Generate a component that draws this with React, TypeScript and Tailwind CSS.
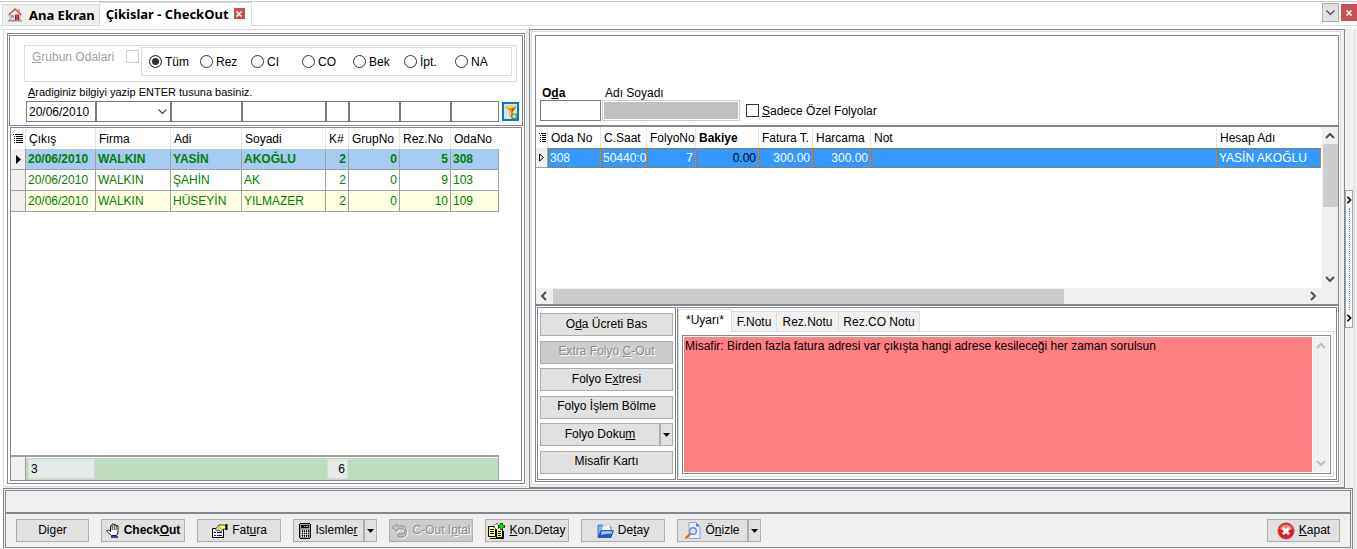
import React from 'react';
import clsx from 'clsx';

const filters = ['Tüm', 'Rez', 'CI', 'CO', 'Bek', 'İpt.', 'NA'];

const guests = [
  { date: '20/06/2010', firm: 'WALKIN', name: 'YASİN', surname: 'AKOĞLU', pax: 2, group: 0, rez: 5, room: '308' },
  { date: '20/06/2010', firm: 'WALKIN', name: 'ŞAHİN', surname: 'AK', pax: 2, group: 0, rez: 9, room: '103' },
  { date: '20/06/2010', firm: 'WALKIN', name: 'HÜSEYİN', surname: 'YILMAZER', pax: 2, group: 0, rez: 10, room: '109' },
];

const guestHeads = ['Çıkış', 'Firma', 'Adi', 'Soyadi', 'K#', 'GrupNo', 'Rez.No', 'OdaNo'];
const folioHeads = ['Oda No', 'C.Saat', 'FolyoNo', 'Bakiye', 'Fatura T.', 'Harcama', 'Not', 'Hesap Adı'];

const rowStyles = ['bg-[#a6caf0] font-bold', 'bg-white', 'bg-[#ffffe1]'];

type ChevronProps = { dir: 'up' | 'down' | 'left' | 'right'; className?: string };

function Chevron({ dir, className = 'size-[10px]' }: ChevronProps) {
  const d = {
    up: 'M1 7l4-4 4 4',
    down: 'M1 3l4 4 4-4',
    left: 'M7 1L3 5l4 4',
    right: 'M3 1l4 4-4 4',
  }[dir];
  return (
    <svg viewBox="0 0 10 10" className={clsx('shrink-0', className)} fill="none" stroke="currentColor" strokeWidth="2">
      <path d={d} />
    </svg>
  );
}

function ThinChevron({ className }: { className?: string }) {
  return (
    <svg viewBox="0 0 9 6" className={clsx('h-[6px] w-[9px]', className)} fill="none" stroke="#444" strokeWidth="1.200">
      <path d="M.5.5l4 4 4-4" />
    </svg>
  );
}

function ListIcon() {
  return (
    <svg viewBox="0 0 10 9" className="h-[9px] w-[10px]" shapeRendering="crispEdges">
      <path d="M0 0h1v1H0zM2 0h8v1H2zM1 2h1v1H1zM3 2h7v1H3zM1 4h1v1H1zM3 4h7v1H3zM1 6h1v1H1zM3 6h7v1H3zM1 8h1v1H1zM3 8h7v1H3z" fill="#000" />
    </svg>
  );
}

function SmallListIcon() {
  return (
    <svg viewBox="0 0 7 9" className="h-[9px] w-[7px]" shapeRendering="crispEdges">
      <path d="M0 0h1v1H0zM2 0h5v1H2zM1 2h1v1H1zM3 2h4v1H3zM1 4h1v1H1zM3 4h4v1H3zM1 6h1v1H1zM3 6h4v1H3zM1 8h1v1H1zM3 8h4v1H3z" fill="#000" />
    </svg>
  );
}

function HouseIcon() {
  return (
    <svg viewBox="0 0 14 14" className="size-[14px]">
      <path d="M2 6l5-4.500L12 6v6H2z" fill="#f4f4f4" stroke="#9a9a9a" />
      <path d="M.5 7L7 1l6.500 6" fill="none" stroke="#c9544c" strokeWidth="1.300" />
      <path d="M10 1h2v3l-2-1.500z" fill="#d8928c" />
      <path d="M3 7h3v3H3z" fill="#8d9dad" />
      <path d="M7 6.500h4V12H7z" fill="#b3131b" />
      <path d="M9 6.500V12" stroke="#f4c8c8" strokeWidth=".6" />
      <path d="M0 12.800h14" stroke="#9b9b9b" strokeWidth="1.500" />
    </svg>
  );
}

function FunnelIcon() {
  return (
    <svg viewBox="0 0 13 15" className="h-[15px] w-[13px]">
      <path d="M.5 2.500h12L8.500 8v6.500l-3-2.500V8z" fill="#dc9a12" />
      <path d="M8 4l4.500-1.500L8.500 8v6l-1.500-1z" fill="#a86c04" />
      <ellipse cx="6.500" cy="2.500" rx="6" ry="1.500" fill="#f4cf66" />
      <path d="M3 4.500L6.500 8v3" stroke="#ffe9a0" fill="none" />
      <path d="M7.500 9.500h5.500V15H7.500z" fill="#5fae45" />
      <path d="M10.200 10.500v3.500M8.500 12.200h3.500" stroke="#e4f8dc" />
    </svg>
  );
}

function HandIcon() {
  return (
    <svg viewBox="0 0 14 15" className="h-[15px] w-[14px]">
      <path d="M4.500 8.500V3q1-1.500 1.500 0V1.500q1-1.500 2 0v.5q1-1.200 2 0v1q1-1.200 2 0V9q0 2-1.500 3.500h-5L.8 8.500Q1 6.500 2.500 7.200z" fill="#fff" stroke="#000" strokeWidth=".9" />
      <path d="M6.200 3V7M8.200 2v5M10.200 3v4" stroke="#000" strokeWidth=".8" />
      <path d="M5 14h7" stroke="#0000c8" strokeWidth="1.500" />
    </svg>
  );
}

function InvoiceIcon() {
  return (
    <svg viewBox="0 0 17 14" className="h-[14px] w-[17px]">
      <path d="M1.500 4.500h11v9h-11z" fill="#fff" stroke="#000" />
      <path d="M3 8.500h2M6 8.500h5M3 11.500h2M6 11.500h5" stroke="#0000c8" />
      <path d="M4.500 5L8 1h5l2 1v3h-3l-2 3.500L8 6 6 7z" fill="#ffff70" stroke="#222" strokeWidth=".8" />
      <path d="M7 4h4M8 2l3 4M6.500 5.500L9 3" stroke="#999" strokeWidth=".6" />
      <path d="M14.500 0h2v6h-2z" fill="#000" />
    </svg>
  );
}

function CalculatorIcon() {
  return (
    <svg viewBox="0 0 12 16" className="h-[16px] w-[12px]" shapeRendering="crispEdges">
      <path d="M1 0h10v1h1v14h-1v1H1v-1H0V1h1z" fill="#000" />
      <path d="M1 1h10v14H1z" fill="#9a9a9a" />
      <path d="M2 2h8v3H2z" fill="#111" />
      <path d="M5 3h1v1H5zM7 3h2v1H7z" fill="#4fd8d8" />
      <path d="M2 7h1v1H2zM4 7h1v1H4zM6 7h1v1H6zM8 7h1v1H8zM2 9h1v1H2zM4 9h1v1H4zM6 9h1v1H6zM8 9h1v1H8zM2 11h1v1H2zM4 11h1v1H4zM6 11h1v1H6zM8 11h1v1H8zM2 13h1v1H2zM4 13h1v1H4zM6 13h1v1H6zM8 13h1v1H8z" fill="#fff" />
      <path d="M3 7h1v2H3zM5 7h1v2H5zM7 7h1v2H7zM9 7h1v2H9zM3 10h1v1H3zM5 10h1v1H5zM7 10h1v1H7zM9 10h1v1H9zM3 12h1v2H3zM5 12h1v2H5zM7 12h1v2H7zM9 12h1v2H9z" fill="#111" />
    </svg>
  );
}

function UndoIcon() {
  return (
    <svg viewBox="0 0 17 16" className="h-[16px] w-[17px]" fill="none">
      <path d="M7 2L2 5.500l5 4V7h5q3 0 3 2.500T12 12H8v3h5q3.500-1 3.500-5.500T13 4H7z" stroke="#fff" />
      <path d="M6 1L1 4.500l5 4V6h5q3 0 3 2.500T11 11H7v3h5q3.500-1 3.500-5.500T12 3H6z" fill="#c6c6c6" stroke="#8c8c8c" />
    </svg>
  );
}

function ReportIcon() {
  return (
    <svg viewBox="0 0 17 16" className="h-[16px] w-[17px]">
      <path d="M.5 3.500h7v10h-7z" fill="#ffff80" stroke="#000" />
      <path d="M8.500 4.500h6v10h-6z" fill="#ffff80" stroke="#000" />
      <path d="M6 2.500l2-2 3 1v3L9 7 6.500 5z" fill="#fff" stroke="#000" strokeWidth=".8" strokeDasharray="2 1" />
      <path d="M2 6.500h4M2 8.500h4M2 10.500h4M10 8.500h3M10 10.500h3M10 12.500h3" stroke="#000" />
      <path d="M2 15.500h13.500V8" fill="none" stroke="#000" />
      <path d="M13.500 0v7M10 3.500h7" stroke="#085c08" strokeWidth="3" />
      <path d="M13.500 1v5M11 3.500h5" stroke="#20e820" strokeWidth="1.500" />
    </svg>
  );
}

function FolderIcon() {
  return (
    <svg viewBox="0 0 17 15" className="h-[15px] w-[17px]">
      <path d="M1 2h4l1 2h8v10H1z" fill="#7fb0f2" stroke="#2456b0" strokeWidth=".7" />
      <path d="M5 4l7-3.500 2 7-9 2z" fill="#f2f7ff" stroke="#9ab4de" strokeWidth=".6" />
      <path d="M4 7.500h12.500L14 14.500H1z" fill="#1f55cf" stroke="#1e46a5" strokeWidth=".7" />
      <path d="M4.500 8.200h11l-.8 2.300q-6 0-10.700 1.500z" fill="#a4ccfb" />
    </svg>
  );
}

function PreviewIcon() {
  return (
    <svg viewBox="0 0 16 17" className="h-[17px] w-[16px]">
      <path d="M4 .5h7l4 4v12H4z" fill="#e6effc" stroke="#7b94c6" strokeWidth=".8" />
      <path d="M11 .5l4 4h-4z" fill="#5b7bcc" />
      <circle cx="8" cy="9" r="3.300" fill="#d8eafd" stroke="#7189ba" strokeWidth="1.400" />
      <path d="M4.800 12.200L1.200 15.800" stroke="#db731c" strokeWidth="2.200" strokeLinecap="round" />
    </svg>
  );
}

function StopIcon() {
  return (
    <svg viewBox="0 0 18 18" className="size-[18px]">
      <circle cx="9" cy="9" r="8.200" fill="#e01a1f" stroke="#b86b6b" strokeWidth=".8" />
      <path d="M2.500 7a7 7 0 0 1 13 0q-6 3-13 0z" fill="#f37b78" />
      <path d="M5.800 5.800l6.400 6.400M12.200 5.800l-6.400 6.400" stroke="#fff" strokeWidth="2.800" />
    </svg>
  );
}

function CrossIcon() {
  return (
    <svg viewBox="0 0 6 6" className="size-[6px]">
      <path d="M.5.5l5 5M5.500.5l-5 5" stroke="#fff" strokeWidth="1.500" />
    </svg>
  );
}

function DropArrow() {
  return (
    <svg viewBox="0 0 7 4" className="h-[4px] w-[7px]">
      <path d="M0 0h7L3.500 4z" fill="#000" />
    </svg>
  );
}

type ButtonProps = {
  children: React.ReactNode;
  icon?: React.ReactNode;
  className?: string;
  split?: boolean;
  disabled?: boolean;
};

function ToolButton({ children, icon, className, split, disabled }: ButtonProps) {
  return (
    <div className={clsx('flex h-[23px] shrink-0', className)}>
      <button
        type="button"
        disabled={disabled}
        className={clsx(
          'flex flex-1 items-center justify-center gap-1 border border-[#adadad] whitespace-nowrap',
          disabled ? 'bg-[#cccccc] text-[#8c8c8c] [text-shadow:1px_1px_0_#fff]' : 'bg-[#e1e1e1]'
        )}
      >
        {icon}
        <span className="pb-[2px]">{children}</span>
      </button>
      {split && (
        <button type="button" aria-label="Menü" className="flex w-[13px] items-center justify-center border border-[#adadad] bg-[#e1e1e1]">
          <DropArrow />
        </button>
      )}
    </div>
  );
}

function TabBar() {
  return (
    <header className="flex h-[26px] shrink-0 items-end border-b border-[#dcdcdc] pl-[2px] font-['Noto_Sans',sans-serif] text-[13px] font-bold">
      <a href="#ana" className="flex h-[21px] items-center gap-[7px] border-t border-l border-[#dcdcdc] bg-[#f0f0f0] pr-1 pl-[5px]">
        <HouseIcon />
        Ana Ekran
      </a>
      <div className="relative z-10 -mb-px flex h-[24px] items-center gap-[5px] border-x border-t border-[#dcdcdc] bg-white px-[6px] pb-[2px]">
        <a href="#cikislar">Çikislar - CheckOut</a>
        <button type="button" aria-label="Sekmeyi kapat" className="flex size-[11px] items-center justify-center bg-[#c75050]">
          <CrossIcon />
        </button>
      </div>
      <div className="ml-auto flex items-center gap-[2px] self-center">
        <button type="button" aria-label="Sekmeler" className="flex h-[19px] w-[17px] items-center justify-center border border-[#adadad] bg-[#e1e1e1]">
          <ThinChevron />
        </button>
        <button type="button" aria-label="Kapat" className="flex h-[17px] w-[16px] items-center justify-center bg-[#c75050]">
          <CrossIcon />
        </button>
      </div>
    </header>
  );
}

function SearchPanel() {
  const box = 'h-[21px] border border-[#7a7a7a] bg-white px-[2px]';
  return (
    <div className="h-[91px] shrink-0 border border-[#828790] pt-[9px] pl-4">
      <div className="mr-[5px] ml-[-2px] flex h-[37px] items-start border border-[#dcdcdc] pt-px pr-1 pl-[7px]">
        <label htmlFor="group" className="pt-[2px] text-[#a0a0a0]"><u>G</u>rubun Odalari</label>
        <input id="group" type="checkbox" disabled className="mt-[3px] mr-[2px] ml-auto size-[13px] appearance-none border border-[#cccccc] bg-white" />
        <div className="flex h-[29px] w-[371px] items-center border border-[#dcdcdc] pl-[7px]">
          {filters.map((f, i) => (
            <label key={f} className="flex w-[51px] items-center gap-[3px]">
              <input
                type="radio"
                name="durum"
                defaultChecked={i === 0}
                className="size-[13px] shrink-0 appearance-none rounded-full border border-[#333] bg-white checked:bg-[#333] checked:shadow-[inset_0_0_0_2px_white]"
              />
              {f}
            </label>
          ))}
        </div>
      </div>
      <label htmlFor="date" className="block pt-[2px] pl-[2px] font-['Liberation_Sans',Arial,sans-serif] text-[11px] leading-[17px]">
        <u>A</u>radiginiz bilgiyi yazip ENTER tusuna basiniz.
      </label>
      <div className="flex">
        <input id="date" defaultValue="20/06/2010" className={clsx(box, 'w-[70px]')} />
        <div className="relative w-[75px]">
          <select aria-label="Firma" className={clsx(box, 'w-full appearance-none')} />
          <ThinChevron className="pointer-events-none absolute top-2 right-1" />
        </div>
        <input aria-label="Adi" className={clsx(box, 'w-[71px]')} />
        <input aria-label="Soyadi" className={clsx(box, 'w-[84px]')} />
        <input aria-label="K#" className={clsx(box, 'w-[23px]')} />
        <input aria-label="GrupNo" className={clsx(box, 'w-[51px]')} />
        <input aria-label="Rez.No" className={clsx(box, 'w-[51px]')} />
        <input aria-label="OdaNo" className={clsx(box, 'w-[48px]')} />
        <button type="button" aria-label="Filtre" className="mt-px ml-[3px] flex h-[19px] w-[17px] items-center justify-center border-2 border-[#0078d7] bg-[#e1e1e1]">
          <FunnelIcon />
        </button>
      </div>
    </div>
  );
}

function GuestGrid() {
  const cell = 'h-[21px] overflow-hidden border-r border-b border-[#a0a0a0] px-[2px] whitespace-nowrap';
  return (
    <div className="mx-px flex flex-1 flex-col border border-[#828790]">
      <table className="w-[488px] table-fixed border-separate border-spacing-0 text-[#008000]">
        <colgroup>
          <col className="w-[15px]" />
          <col className="w-[70px]" />
          <col className="w-[75px]" />
          <col className="w-[71px]" />
          <col className="w-[84px]" />
          <col className="w-[23px]" />
          <col className="w-[51px]" />
          <col className="w-[51px]" />
          <col className="w-[48px]" />
        </colgroup>
        <thead>
          <tr className="h-[21px] text-left text-black">
            <th className="border-r border-[#e5e5e5] pl-[2px]"><ListIcon /></th>
            {guestHeads.map((h) => (
              <th key={h} className="border-r border-[#e5e5e5] pl-[3px] font-normal whitespace-nowrap last:border-white">{h}</th>
            ))}
          </tr>
        </thead>
        <tbody>
          {guests.map((g, i) => (
            <tr key={g.room} className={rowStyles[i]}>
              <td className="h-[21px] border-r border-b border-[#a0a0a0] bg-[#f0f0f0] pl-[5px]">
                {i === 0 && <svg viewBox="0 0 5 9" className="h-[9px] w-[5px]"><path d="M0 0l5 4.500L0 9z" /></svg>}
              </td>
              <td className={cell}>{g.date}</td>
              <td className={cell}>{g.firm}</td>
              <td className={cell}>{g.name}</td>
              <td className={cell}>{g.surname}</td>
              <td className={clsx(cell, 'text-right')}>{g.pax}</td>
              <td className={clsx(cell, 'text-right')}>{g.group}</td>
              <td className={clsx(cell, 'text-right')}>{g.rez}</td>
              <td className={cell}>{g.room}</td>
            </tr>
          ))}
        </tbody>
      </table>
      <div className="mt-auto flex h-[25px] w-[488px] border-t-2 border-r border-[#a0a0a0]">
        <div className="w-[15px] border-r border-[#a0a0a0] bg-[#f0f0f0]" />
        <div className="mt-px flex flex-1 bg-[#c0dcc0] py-px pl-[2px]">
          <div className="w-[67px] border border-[#d4dcd4] bg-[#e6eaea] pl-[2px] leading-[18px]">3</div>
          <div className="ml-[232px] w-[21px] border border-[#d4dcd4] bg-[#e6eaea] pr-[2px] text-right leading-[18px]">6</div>
        </div>
      </div>
    </div>
  );
}

function FolioSearch() {
  return (
    <div className="flex h-[91px] shrink-0 items-end border-b-2 border-[#828790] pb-1 pl-1">
      <div className="w-[61px]">
        <label htmlFor="room" className="block pl-[2px] leading-[14px] font-bold">O<u>d</u>a</label>
        <input id="room" className="block h-[21px] w-full border border-[#7a7a7a] px-1" />
      </div>
      <div className="ml-px w-[138px]">
        <label htmlFor="fullname" className="block pl-[3px] leading-[14px]">Adı Soyadı</label>
        <input id="fullname" disabled className="block h-[21px] w-full border border-[#cccccc] bg-[#c0c0c0] shadow-[inset_0_0_0_1px_white]" />
      </div>
      <label className="ml-[6px] flex h-[21px] items-center gap-[3px]">
        <input type="checkbox" className="size-[13px] appearance-none border border-[#333] bg-white" />
        <span><u>S</u>adece Özel Folyolar</span>
      </label>
    </div>
  );
}

function FolioGrid() {
  const cell = 'h-[20px] overflow-hidden border-r border-[#a0a0a0] pl-[2px] whitespace-nowrap outline-dotted outline-1 -outline-offset-1 outline-[#cc6600]';
  return (
    <div className="flex flex-1 flex-col border-b-2 border-[#828790]">
      <div className="flex flex-1">
        <div className="flex-1 pr-px">
          <table className="w-full table-fixed border-separate border-spacing-0">
            <colgroup>
              <col className="w-[12px]" />
              <col className="w-[53px]" />
              <col className="w-[46px]" />
              <col className="w-[49px]" />
              <col className="w-[63px]" />
              <col className="w-[54px]" />
              <col className="w-[58px]" />
              <col />
              <col className="w-[104px]" />
            </colgroup>
            <thead>
              <tr className="h-[21px] text-left">
                <th className="border-r border-[#e5e5e5] pl-[3px]"><SmallListIcon /></th>
                {folioHeads.map((h) => (
                  <th
                    key={h}
                    className={clsx(
                      'overflow-hidden border-r border-[#e5e5e5] pl-[3px] whitespace-nowrap last:border-white',
                      h === 'Bakiye' ? 'font-bold' : 'font-normal'
                    )}
                  >
                    {h}
                  </th>
                ))}
              </tr>
            </thead>
            <tbody>
              <tr className="bg-[#3399ff] text-white">
                <td className="border-r border-b border-[#a0a0a0] bg-[#f0f0f0] pl-[3px]">
                  <svg viewBox="0 0 5 9" className="h-[9px] w-[5px]"><path d="M.5 1L4.500 4.500.5 8z" fill="none" stroke="#000" /></svg>
                </td>
                <td className={cell}>308</td>
                <td className={cell}>50440:0</td>
                <td className={clsx(cell, 'pr-[2px] text-right')}>7</td>
                <td className={clsx(cell, 'pr-[2px] text-right text-black')}>0.00</td>
                <td className={clsx(cell, 'pr-[2px] text-right')}>300.00</td>
                <td className={clsx(cell, 'pr-[2px] text-right')}>300.00</td>
                <td className={cell} />
                <td className={cell}>YASİN AKOĞLU</td>
              </tr>
            </tbody>
          </table>
        </div>
        <div className="flex w-[16px] flex-col items-center bg-[#f0f0f0] py-1 text-[#505050]">
          <Chevron dir="up" />
          <div className="mt-[3px] h-[63px] w-[15px] bg-[#cdcdcd]" />
          <Chevron dir="down" className="mt-auto size-[10px]" />
        </div>
      </div>
      <div className="flex h-[16px] items-center bg-[#f0f0f0] pr-5 pl-[3px] text-[#505050]">
        <Chevron dir="left" />
        <div className="mx-1 flex-1">
          <div className="h-[15px] w-[68%] bg-[#cdcdcd]" />
        </div>
        <Chevron dir="right" />
      </div>
    </div>
  );
}

function FolioActions() {
  return (
    <div className="flex w-[139px] shrink-0 flex-col justify-between border border-[#828790] px-[2px] py-[5px]">
      <ToolButton>O<u>d</u>a Ücreti Bas</ToolButton>
      <ToolButton disabled>Extra Folyo <u>C</u>-Out</ToolButton>
      <ToolButton>Folyo E<u>x</u>tresi</ToolButton>
      <ToolButton>Folyo İşlem Bölme</ToolButton>
      <ToolButton split>Folyo Doku<u>m</u></ToolButton>
      <ToolButton>Misafir Kartı</ToolButton>
    </div>
  );
}

function Notes() {
  const tab = 'flex h-[20px] items-center justify-center border-t border-r border-[#dcdcdc] bg-[#f0f0f0]';
  return (
    <div className="flex flex-1 flex-col border border-[#828790] pt-px pr-[2px] pb-[2px]">
      <div className="flex items-end">
        <button type="button" className="relative z-10 -mb-px flex h-[23px] w-[54px] items-center justify-center border-x border-t border-[#dcdcdc] bg-white pb-[2px]">*Uyarı*</button>
        <button type="button" className={clsx(tab, 'w-[45px]')}>F.Notu</button>
        <button type="button" className={clsx(tab, 'w-[62px]')}>Rez.Notu</button>
        <button type="button" className={clsx(tab, 'w-[81px]')}>Rez.CO Notu</button>
      </div>
      <div className="flex flex-1 border border-[#dcdcdc] px-[2px] pt-[3px] pb-[2px] pl-[3px]">
        <div className="flex flex-1 border border-[#828790] p-px">
          <textarea
            aria-label="Uyarı"
            className="block flex-1 resize-none overflow-hidden bg-[#ff8080] pt-px pl-px leading-[16px] outline-none"
            defaultValue="Misafir: Birden fazla fatura adresi var çıkışta hangi adrese kesileceği her zaman sorulsun"
          />
          <div className="ml-px flex w-[16px] flex-col items-center justify-between bg-[#f0f0f0] py-1 text-[#bfbfbf]">
            <Chevron dir="up" />
            <Chevron dir="down" />
          </div>
        </div>
      </div>
    </div>
  );
}

function Splitter() {
  return (
    <div className="flex w-[9px] shrink-0 items-center">
      <div className="flex h-[138px] w-[8px] flex-col items-center justify-between border border-[#a0a0a0] bg-[#f8f8f8] py-[5px]">
        <Chevron dir="right" className="size-[8px]" />
        <div className="my-1 flex-1 border-l border-dotted border-[#3399ff]" />
        <Chevron dir="right" className="size-[8px]" />
      </div>
    </div>
  );
}

function BottomBar() {
  return (
    <footer className="mr-px shrink-0 border-x border-t border-[#828790] bg-[#f0f0f0] px-px pt-px pb-px">
      <div className="border border-[#828790]">
        <div className="h-[23px] border-b-2 border-[#828790]" />
        <div className="flex gap-3 px-[10px] py-[5px]">
          <ToolButton className="w-[73px]">Di<u>g</u>er</ToolButton>
          <ToolButton className="w-[84px] font-bold" icon={<HandIcon />}>Check<u>O</u>ut</ToolButton>
          <ToolButton className="w-[84px]" icon={<InvoiceIcon />}>Fat<u>u</u>ra</ToolButton>
          <ToolButton className="w-[84px]" icon={<CalculatorIcon />} split>Islemle<u>r</u></ToolButton>
          <ToolButton className="w-[84px]" icon={<UndoIcon />} disabled>C-Out I<u>p</u>tal</ToolButton>
          <ToolButton className="w-[84px]" icon={<ReportIcon />}><u>K</u>on.Detay</ToolButton>
          <ToolButton className="w-[84px]" icon={<FolderIcon />}>De<u>t</u>ay</ToolButton>
          <ToolButton className="w-[84px]" icon={<PreviewIcon />} split>Ö<u>n</u>izle</ToolButton>
          <ToolButton className="ml-auto w-[73px]" icon={<StopIcon />}><u>K</u>apat</ToolButton>
        </div>
      </div>
    </footer>
  );
}

export default function App() {
  return (
    <div className="flex h-screen min-h-[480px] flex-col bg-white font-['Liberation_Sans',Arial,sans-serif] text-[12px] leading-[16px] text-black">
      <div className="h-[2px] shrink-0 border-b border-[#c8c8c8]" />
      <div className="-mt-[2px]">
        <TabBar />
      </div>
      <div className="mt-[3px] flex flex-1 bg-[#f0f0f0]">
        <div className="w-[3px] shrink-0 bg-white" />
        <div className="flex min-w-0 flex-1 flex-col border-r border-[#dcdcdc]">
          <main className="flex flex-1">
            <section className="mr-[2px] mb-px flex w-[524px] shrink-0 flex-col border border-[#dcdcdc] bg-white pt-[3px] pr-px pb-[2px] pl-[3px]">
              <div className="flex flex-1 flex-col gap-px border border-[#828790] px-px pt-px pb-[2px]">
                <SearchPanel />
                <GuestGrid />
              </div>
            </section>
            <section className="flex min-w-0 flex-1 border border-[#828790] pt-px pr-[3px] pb-[2px] pl-px">
              <div className="flex min-w-0 flex-1 border border-[#dcdcdc] bg-white pt-[3px] pr-px pb-[2px] pl-[3px]">
                <div className="flex min-w-0 flex-1 flex-col border border-[#828790]">
                  <FolioSearch />
                  <FolioGrid />
                  <div className="flex h-[175px] shrink-0 gap-px p-px">
                    <FolioActions />
                    <Notes />
                  </div>
                </div>
              </div>
            </section>
            <Splitter />
          </main>
          <BottomBar />
        </div>
        <div className="w-[2px] shrink-0" />
      </div>
    </div>
  );
}
